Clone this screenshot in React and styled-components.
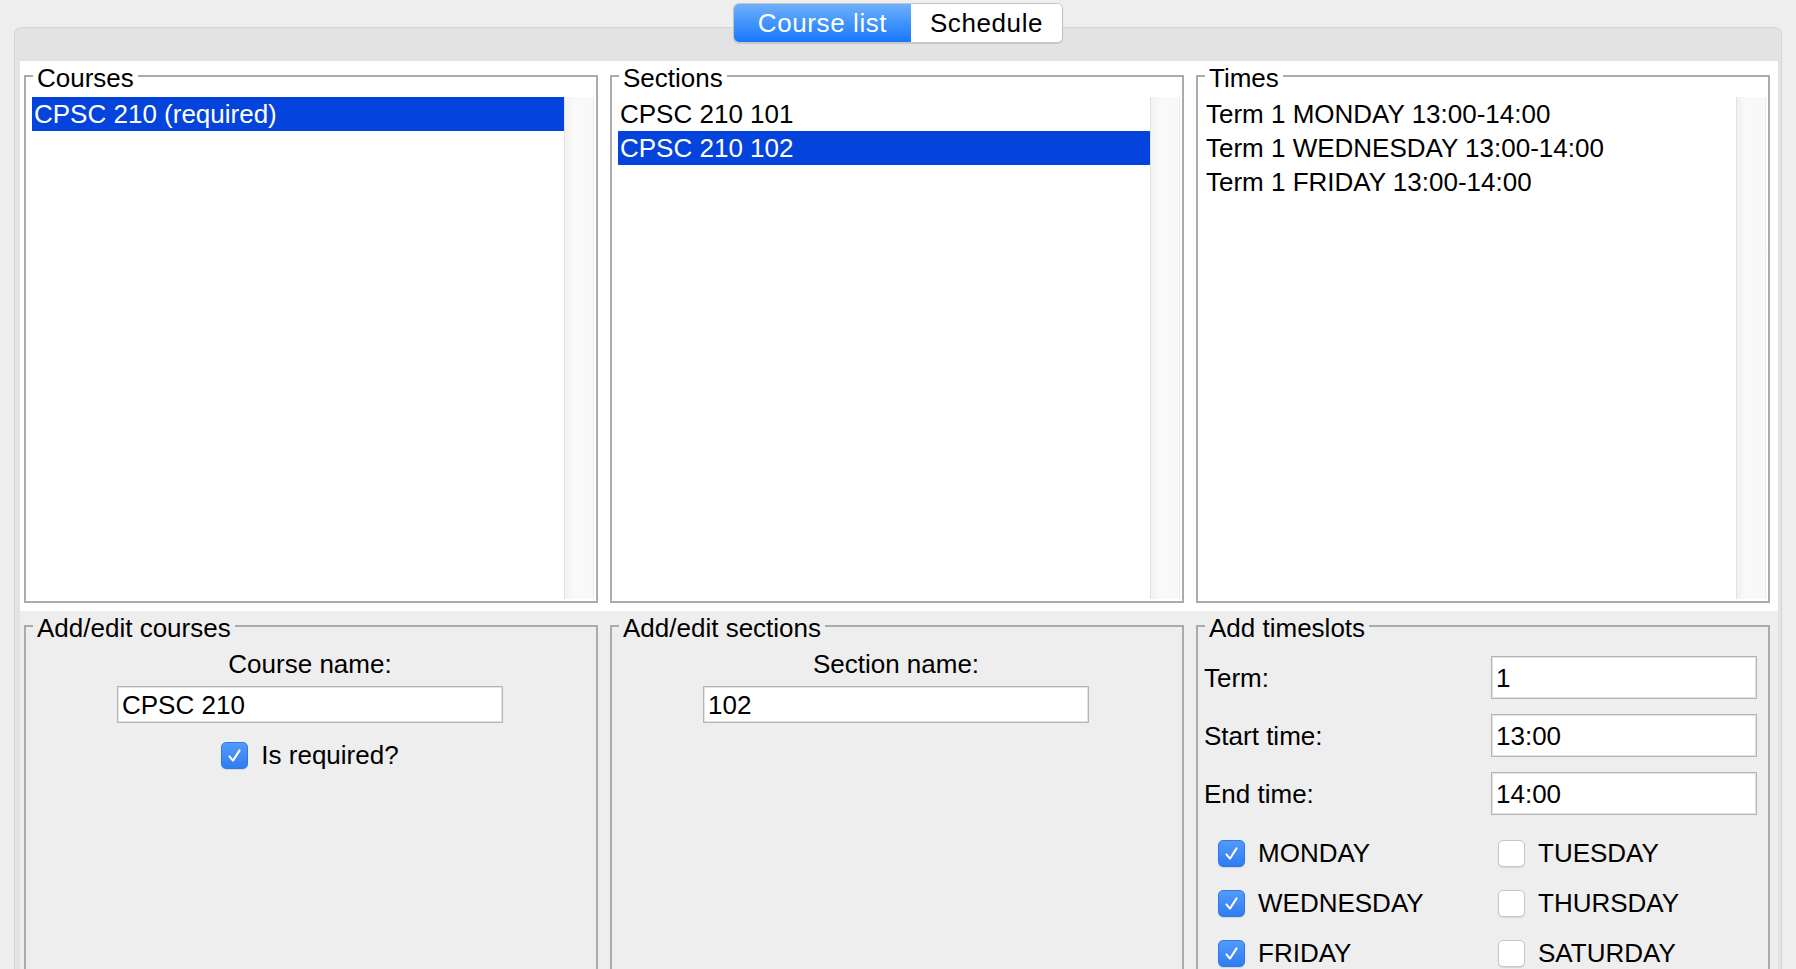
import React from 'react';
import styled, { createGlobalStyle } from 'styled-components';

const GlobalStyle = createGlobalStyle`
  html, body {
    margin: 0;
    padding: 0;
    overflow: hidden;
    background: #eeeeee;
  }
  body {
    font-family: "Liberation Sans", Arial, sans-serif;
    font-size: 26px;
    color: #000;
  }
  * { box-sizing: border-box; }
`;

const Window = styled.div`
  height: 969px;
  overflow: hidden;
  padding: 3px 14px 0 14px;
  display: flex;
  flex-direction: column;
`;

const TabBar = styled.div`
  display: flex;
  justify-content: center;
  position: relative;
  z-index: 1;
`;

const Segment = styled.div`
  display: flex;
  height: 40px;
  border: 1px solid #c4c4c4;
  border-radius: 6px;
  overflow: hidden;
  background: #fff;
  box-shadow: 0 1px 1px rgba(0, 0, 0, 0.12);
`;

const Tab = styled.div`
  width: ${p => p.$w}px;
  display: flex;
  align-items: center;
  justify-content: center;
  letter-spacing: 0.6px;
  color: ${p => (p.$active ? '#fff' : '#000')};
  background: ${p => (p.$active ? 'linear-gradient(#6eb0fb, #1777fb)' : '#fff')};
`;

const Pane = styled.div`
  margin-top: -16px;
  flex: none;
  background: #e3e3e3;
  border: 1px solid #d6d6d6;
  border-bottom: none;
  border-radius: 7px 7px 0 0;
  padding: 33px 3px 0 5px;
  display: flex;
  flex-direction: column;
`;

const TopPanel = styled.div`
  height: 550px;
  background: #fff;
  display: grid;
  grid-template-columns: repeat(3, 1fr);
  column-gap: 12px;
  padding: 0 8px 8px 4px;
`;

const BottomPanel = styled.div`
  height: 420px;
  background: #eeeeee;
  display: grid;
  grid-template-columns: repeat(3, 1fr);
  column-gap: 12px;
  padding: 0 8px 0 4px;
`;

const Group = styled.fieldset`
  margin: 0;
  min-width: 0;
  border: 2px solid #ababab;
  padding: 6px 2px 2px 6px;
  display: flex;
  flex-direction: column;
`;

const Legend = styled.legend`
  margin-left: 1px;
  padding: 4px 4px 0;
  line-height: 26px;
`;

const ScrollBox = styled.div`
  flex: 1;
  display: flex;
  min-height: 0;
`;

const ListArea = styled.div`
  flex: 1;
  background: #fff;
`;

const Track = styled.div`
  width: 30px;
  flex: none;
  background: linear-gradient(90deg, #f2f2f2, #fafafa 35%, #f8f8f8);
  border-left: 1px solid #e2e2e2;
  border-right: 1px solid #ececec;
`;

const Row = styled.div`
  height: 34px;
  line-height: 34px;
  padding-left: 2px;
  white-space: nowrap;
  background: ${p => (p.$selected ? '#0443dc' : 'transparent')};
  color: ${p => (p.$selected ? '#fff' : '#000')};
`;

const CenterForm = styled.div`
  display: flex;
  flex-direction: column;
  align-items: center;
  padding-top: 2px;
  margin-right: 6px;
`;

const FieldLabel = styled.div`
  line-height: 30px;
`;

const TextField = styled.input`
  width: ${p => p.$w || 266}px;
  height: ${p => p.$h || 43}px;
  margin: 0;
  margin-top: ${p => p.$top || 0}px;
  padding: 2px 4px 0;
  border: 1px solid #b4b4b4;
  box-shadow: inset 0 0 0 1px #e2e2e2;
  background: #fff;
  font-family: inherit;
  font-size: 26px;
  color: #000;
  outline: none;
`;

const TimeGrid = styled.div`
  display: grid;
  grid-template-columns: 287px 266px;
  grid-auto-rows: 43px;
  row-gap: 15px;
  align-items: center;
  padding-top: 9px;
`;

const DayGrid = styled.div`
  display: grid;
  grid-template-columns: 280px 280px;
  grid-auto-rows: 28px;
  row-gap: 22px;
  margin-top: 24px;
`;

const Check = styled.label`
  display: flex;
  align-items: center;
  gap: 13px;
  line-height: 28px;
  padding-left: ${p => p.$indent || 0}px;
  margin-top: ${p => p.$top || 0}px;
`;

const Box = styled.span`
  width: 27px;
  height: 27px;
  flex: none;
  border-radius: 5px;
  display: flex;
  align-items: center;
  justify-content: center;
  background: ${p => (p.$checked ? 'linear-gradient(#529bfa, #2f7cf4)' : '#fff')};
  border: 1px solid ${p => (p.$checked ? '#2f78ea' : '#c6c6c6')};
  box-shadow: 0 1px 1px rgba(0, 0, 0, 0.1);
`;

const CheckBox = ({ checked, children, indent, top }) => (
  <Check $indent={indent} $top={top}>
    <Box $checked={checked}>
      {checked && (
        <svg width="27" height="27" viewBox="0 0 27 27">
          <path d="M8 14.5 L11.8 19 L19 8" fill="none" stroke="#fff" strokeWidth="2.2" strokeLinecap="round" strokeLinejoin="round" />
        </svg>
      )}
    </Box>
    {children}
  </Check>
);

const ListBox = ({ title, items, selected }) => (
  <Group>
    <Legend>{title}</Legend>
    <ScrollBox>
      <ListArea>
        {items.map((item, i) => (
          <Row key={item} $selected={i === selected}>{item}</Row>
        ))}
      </ListArea>
      <Track />
    </ScrollBox>
  </Group>
);

const days = [
  ['MONDAY', true], ['TUESDAY', false],
  ['WEDNESDAY', true], ['THURSDAY', false],
  ['FRIDAY', true], ['SATURDAY', false],
];

export default function App() {
  return (
    <>
      <GlobalStyle />
      <Window>
        <TabBar>
          <Segment>
            <Tab $active $w={177}>Course list</Tab>
            <Tab $w={151}>Schedule</Tab>
          </Segment>
        </TabBar>
        <Pane>
          <TopPanel>
            <ListBox title="Courses" items={['CPSC 210 (required)']} selected={0} />
            <ListBox title="Sections" items={['CPSC 210 101', 'CPSC 210 102']} selected={1} />
            <ListBox
              title="Times"
              items={[
                'Term 1 MONDAY 13:00-14:00',
                'Term 1 WEDNESDAY 13:00-14:00',
                'Term 1 FRIDAY 13:00-14:00',
              ]}
              selected={-1}
            />
          </TopPanel>
          <BottomPanel>
            <Group>
              <Legend>Add/edit courses</Legend>
              <CenterForm>
                <FieldLabel>Course name:</FieldLabel>
                <TextField $w={386} $h={37} $top={7} defaultValue="CPSC 210" />
                <CheckBox checked top={18}>Is required?</CheckBox>
              </CenterForm>
            </Group>
            <Group>
              <Legend>Add/edit sections</Legend>
              <CenterForm>
                <FieldLabel>Section name:</FieldLabel>
                <TextField $w={386} $h={37} $top={7} defaultValue="102" />
              </CenterForm>
            </Group>
            <Group>
              <Legend>Add timeslots</Legend>
              <TimeGrid>
                <FieldLabel>Term:</FieldLabel>
                <TextField defaultValue="1" />
                <FieldLabel>Start time:</FieldLabel>
                <TextField defaultValue="13:00" />
                <FieldLabel>End time:</FieldLabel>
                <TextField defaultValue="14:00" />
              </TimeGrid>
              <DayGrid>
                {days.map(([d, on]) => (
                  <CheckBox key={d} checked={on} indent={14}>{d}</CheckBox>
                ))}
              </DayGrid>
            </Group>
          </BottomPanel>
        </Pane>
      </Window>
    </>
  );
}
